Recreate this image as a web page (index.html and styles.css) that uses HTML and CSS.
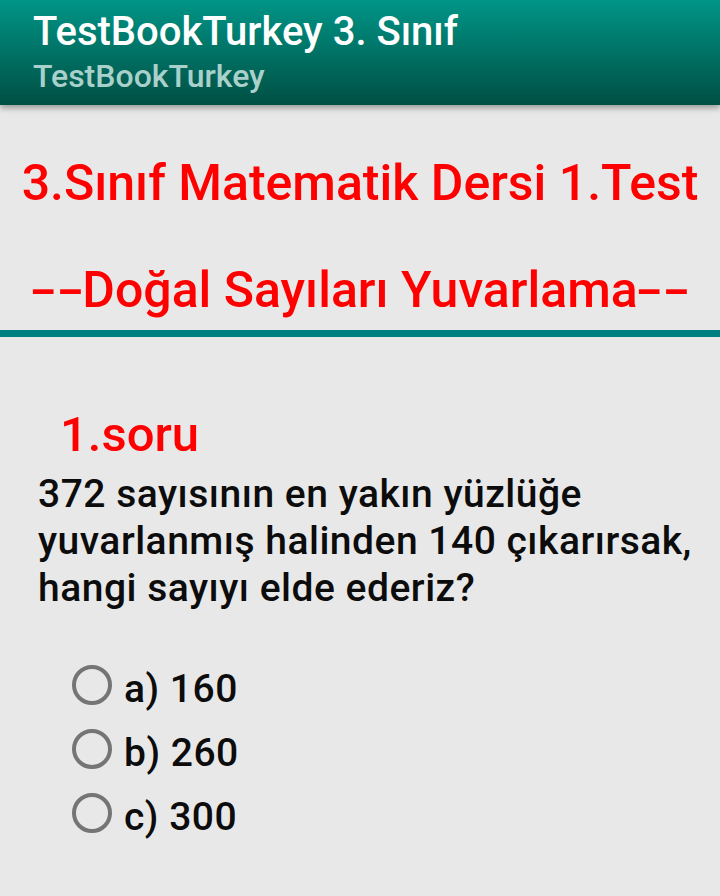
FILE: index.html
```html
<!DOCTYPE html>
<html lang="tr">
<head>
    <meta charset="UTF-8">
    <meta name="viewport" content="width=device-width, initial-scale=1.0">
    <title>TestBookTurkey 3. Sınıf</title>
    <link rel="stylesheet" href="styles.css">
</head>
<body>
    <header class="app-bar">
        <h1 class="app-title">TestBookTurkey 3. Sınıf</h1>
        <div class="app-subtitle">TestBookTurkey</div>
    </header>

    <main class="content">
        <div class="test-title">
            <p>3.Sınıf Matematik Dersi 1.Test</p>
            <p><span class="dash">--</span>Doğal Sayıları Yuvarlama<span class="dash">--</span></p>
        </div>
        <div class="divider"></div>

        <section class="question">
            <h2 class="question-no">1.soru</h2>
            <p class="question-text">372 sayısının en yakın yüzlüğe yuvarlanmış halinden 140 çıkarırsak, hangi sayıyı elde ederiz?</p>

            <div class="options">
                <label class="option"><input type="radio" name="q1"><span class="radio"></span><span class="option-text">a) 160</span></label>
                <label class="option"><input type="radio" name="q1"><span class="radio"></span><span class="option-text">b) 260</span></label>
                <label class="option"><input type="radio" name="q1"><span class="radio"></span><span class="option-text">c) 300</span></label>
            </div>
        </section>
    </main>
</body>
</html>
```

FILE: styles.css
```css
* {
    box-sizing: border-box;
    margin: 0;
    padding: 0;
}

body {
    font-family: Roboto, "Liberation Sans", sans-serif;
    background-color: #e8e8e8;
    width: 720px;
    height: 896px;
    overflow: hidden;
}

.app-bar {
    height: 105px;
    padding: 9px 33px 0;
    background: linear-gradient(to bottom, #009587, #004f43);
    box-shadow: 0 3px 6px rgba(0, 0, 0, 0.35);
    position: relative;
}

.app-title {
    color: white;
    font-size: 40px;
    font-weight: 500;
    line-height: 46px;
}

.app-subtitle {
    color: #a9d0ca;
    font-size: 32px;
    font-weight: 500;
    line-height: 42px;
}

.test-title {
    text-align: center;
    color: #ff0000;
    font-size: 50px;
    font-weight: 500;
    padding-top: 50px;
}

.test-title p {
    line-height: 56px;
    margin-bottom: 51px;
}

.test-title p:last-child {
    margin-bottom: 12px;
}

/* old Roboto had longer hyphens */
.dash {
    display: inline-block;
    transform: scaleX(1.6);
    margin: 0 8px;
}

.divider {
    height: 7px;
    background-color: #008080;
}

.question {
    padding: 70px 20px 0 38px;
}

.question-no {
    color: #ff0000;
    font-size: 49px;
    font-weight: 500;
    line-height: 56px;
    padding-left: 22px;
}

.question-text {
    color: #0c0c0c;
    font-size: 39px;
    font-weight: 500;
    letter-spacing: 0.5px;
    line-height: 47px;
    margin-top: 8px;
}

.options {
    display: flex;
    flex-direction: column;
    gap: 24px;
    padding: 53px 0 0 34px;
}

.option {
    display: flex;
    align-items: center;
    gap: 12px;
    height: 40px;
    font-size: 39px;
    font-weight: 500;
    letter-spacing: 0.5px;
    color: #0c0c0c;
    line-height: 40px;
}

.option input {
    display: none;
}

.option-text {
    padding-top: 7px;
}

.radio {
    flex-shrink: 0;
    width: 40px;
    height: 40px;
    border: 4px solid #757575;
    border-radius: 50%;
}
```
